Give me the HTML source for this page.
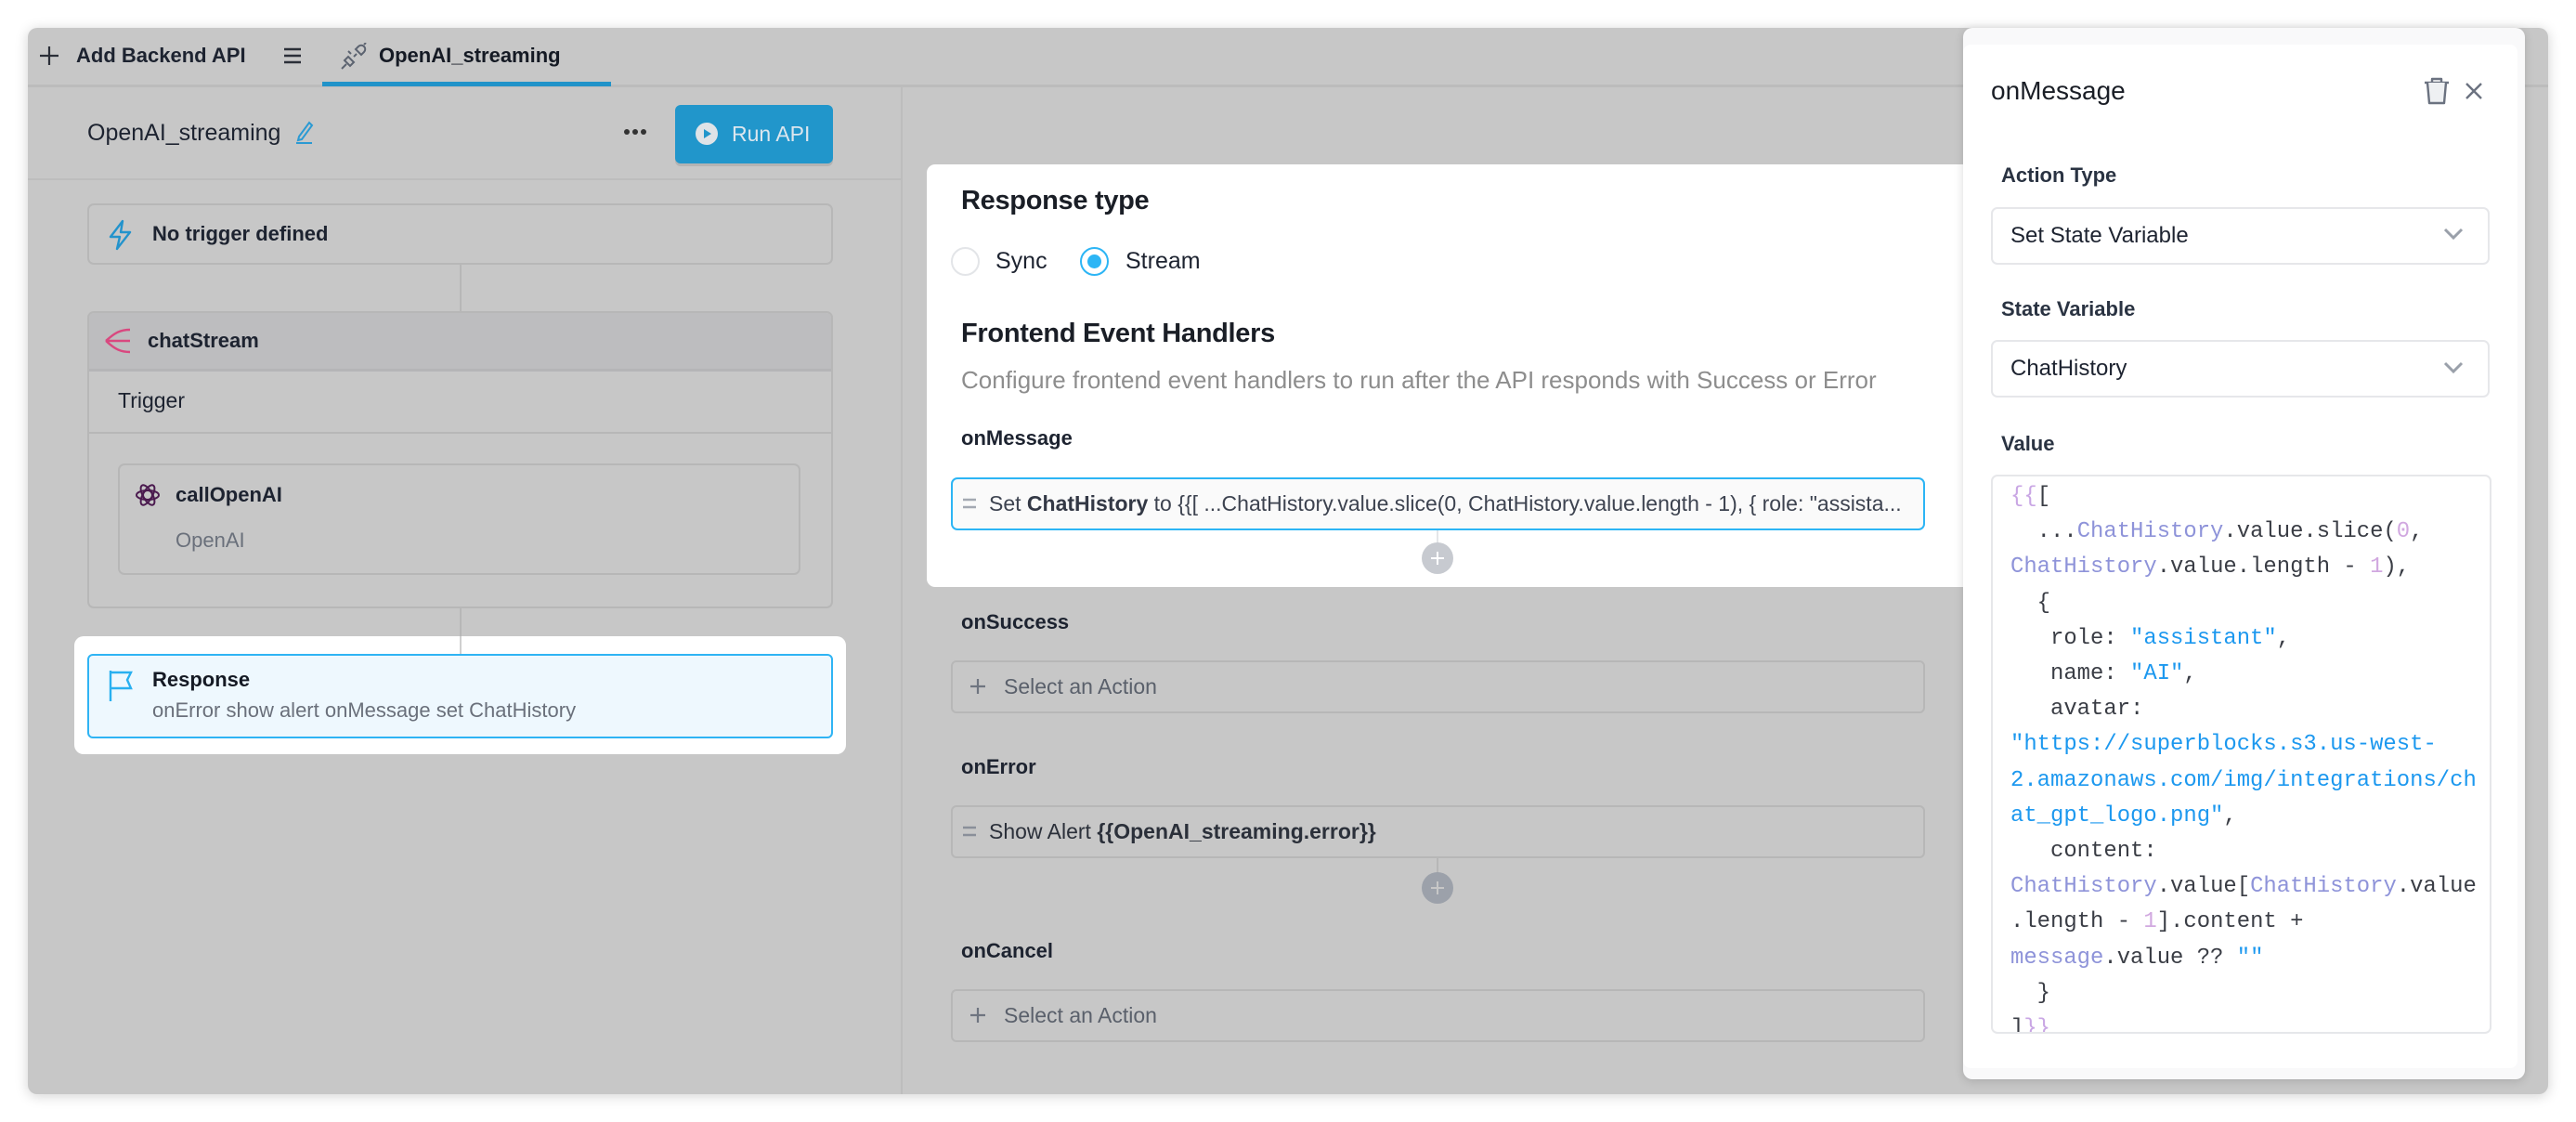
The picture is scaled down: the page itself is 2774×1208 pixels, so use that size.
<!DOCTYPE html>
<html><head><meta charset="utf-8"><style>
*{margin:0;padding:0;box-sizing:border-box}
body{width:2774px;height:1208px;background:#fff;position:relative;overflow:hidden;font-family:"Liberation Sans",Arial,sans-serif;color:#1d2330}
.a{position:absolute}
.t{position:absolute;white-space:nowrap;line-height:40px;height:40px}
.b{font-weight:bold}
.mono{font-family:"Liberation Mono",monospace}
</style></head><body>
<div class="a" style="left:30px;top:30px;width:2714px;height:1148px;background:#c7c7c7;border-radius:10px;box-shadow:0 2px 14px rgba(0,0,0,.18)"></div>
<div class="a" style="left:30px;top:91px;width:2714px;height:3px;background:#bcbcbc"></div>
<svg class="a" style="left:42px;top:49px" width="22" height="22" viewBox="0 0 22 22"><path d="M11 1v20M1 11h20" stroke="#2b2f38" stroke-width="2.2"/></svg>
<div class="t b" style="left:82px;top:40px;font-size:22px;color:#1d2330">Add Backend API</div>
<svg class="a" style="left:305px;top:51px" width="20" height="18" viewBox="0 0 20 18"><path d="M1 2h18M1 9h18M1 16h18" stroke="#2b2f38" stroke-width="2.4"/></svg>
<svg class="a" style="left:366px;top:46px" width="30" height="30" viewBox="0 0 30 30" fill="none" stroke="#5c6370" stroke-width="2"><path d="M2 28l5-5M5 19l6 6 4-4-6-6z M12 12l-3-3M15 15l3-3 M17 7l6 6 3-3a4 4 0 0 0-6-6z M26 2l2-2"/></svg>
<div class="t b" style="left:408px;top:40px;font-size:22px;color:#151a24">OpenAI_streaming</div>
<div class="a" style="left:347px;top:88px;width:311px;height:5px;background:#2193c9"></div>
<div class="a" style="left:970px;top:94px;width:2px;height:1084px;background:#bdbdbd"></div>
<div class="a" style="left:30px;top:192px;width:940px;height:2px;background:#bdbdbd"></div>
<div class="t" style="left:94px;top:123px;font-size:25px;color:#1d2330">OpenAI_streaming</div>
<svg class="a" style="left:316px;top:128px" width="24" height="28" viewBox="0 0 24 28" fill="none" stroke="#2b9ad3" stroke-width="2"><path d="M6 19L17 4l3 3L9 22l-4 1z"/><path d="M3 26h17"/></svg>
<svg class="a" style="left:671px;top:138px" width="26" height="8"><circle cx="4" cy="4" r="3" fill="#333"/><circle cx="13" cy="4" r="3" fill="#333"/><circle cx="22" cy="4" r="3" fill="#333"/></svg>
<div class="a" style="left:727px;top:113px;width:170px;height:63px;background:#2196cb;border-radius:6px;box-shadow:0 3px 0 #b3b3b3"></div>
<svg class="a" style="left:748px;top:131px" width="26" height="26" viewBox="0 0 26 26"><circle cx="13" cy="13" r="12" fill="#dfe3e7"/><path d="M10 8l8 5-8 5z" fill="#2196cb"/></svg>
<div class="t" style="left:788px;top:124px;font-size:23px;color:#dce6ee">Run API</div>
<div class="a" style="left:94px;top:219px;width:803px;height:66px;border:2px solid #b7b7b7;border-radius:7px"></div>
<svg class="a" style="left:116px;top:236px" width="28" height="34" viewBox="0 0 28 34" fill="none" stroke="#2393cc" stroke-width="2.4" stroke-linejoin="round"><path d="M16 2L3 19h10l-3 13 14-18H14z"/></svg>
<div class="t b" style="left:164px;top:232px;font-size:22px;color:#1d2330">No trigger defined</div>
<div class="a" style="left:495px;top:285px;width:2px;height:50px;background:#b7b7b7"></div>
<div class="a" style="left:94px;top:335px;width:803px;height:320px;border:2px solid #b7b7b7;border-radius:7px;overflow:hidden">
 <div class="a" style="left:0;top:0;width:100%;height:63px;background:#bdbdbf;border-bottom:3px solid #b5b5b7"></div>
 <div class="a" style="left:0;top:128px;width:100%;height:2px;background:#b7b7b7"></div>
</div>
<svg class="a" style="left:112px;top:352px" width="30" height="30" viewBox="0 0 30 30" fill="none" stroke="#d9487f" stroke-width="2.4"><path d="M28 3C14 3 8 10 2 15M28 27C14 27 8 20 2 15M2 15h26"/></svg>
<div class="t b" style="left:159px;top:347px;font-size:22px;color:#1d2330">chatStream</div>
<div class="t" style="left:127px;top:411px;font-size:23px;color:#1d2330">Trigger</div>
<div class="a" style="left:127px;top:499px;width:735px;height:120px;border:2px solid #b7b7b7;border-radius:7px"></div>
<svg class="a" style="left:145px;top:519px" width="28" height="28" viewBox="0 0 28 28" fill="none" stroke="#4b1a4f" stroke-width="2"><circle cx="14" cy="14" r="5"/><ellipse cx="14" cy="14" rx="12" ry="5"/><ellipse cx="14" cy="14" rx="12" ry="5" transform="rotate(60 14 14)"/><ellipse cx="14" cy="14" rx="12" ry="5" transform="rotate(120 14 14)"/></svg>
<div class="t b" style="left:189px;top:513px;font-size:22px;color:#1d2330">callOpenAI</div>
<div class="t" style="left:189px;top:562px;font-size:22px;color:#6a707b">OpenAI</div>
<div class="a" style="left:495px;top:655px;width:2px;height:45px;background:#b7b7b7"></div>
<div class="a" style="left:80px;top:685px;width:831px;height:127px;background:#fff;border-radius:10px"></div>
<div class="a" style="left:495px;top:685px;width:2px;height:20px;background:#d0d0d0"></div>
<div class="a" style="left:94px;top:704px;width:803px;height:91px;background:#eef8fe;border:2px solid #2fb4f4;border-radius:6px"></div>
<svg class="a" style="left:116px;top:720px" width="30" height="36" viewBox="0 0 30 36" fill="none" stroke="#29b0f0" stroke-width="2.4"><path d="M3 2v33M3 4h22l-4 8 4 9H3"/></svg>
<div class="t b" style="left:164px;top:712px;font-size:22px;color:#151a24">Response</div>
<div class="t" style="left:164px;top:745px;font-size:22px;color:#6a707b">onError show alert onMessage set ChatHistory</div>
<div class="t b" style="left:1035px;top:650px;font-size:22px;color:#1d2330">onSuccess</div>
<div class="a" style="left:1024px;top:711px;width:1049px;height:57px;border:2px solid #b7b7b7;border-radius:6px"></div>
<svg class="a" style="left:1044px;top:730px" width="18" height="18"><path d="M9 1v16M1 9h16" stroke="#6f7580" stroke-width="2.2"/></svg>
<div class="t" style="left:1081px;top:719px;font-size:23px;color:#5a606b">Select an Action</div>
<div class="t b" style="left:1035px;top:806px;font-size:22px;color:#1d2330">onError</div>
<div class="a" style="left:1024px;top:867px;width:1049px;height:57px;border:2px solid #b7b7b7;border-radius:6px"></div>
<svg class="a" style="left:1036px;top:888px" width="16" height="14"><path d="M1 3h14M1 11h14" stroke="#8a8f99" stroke-width="2.5"/></svg>
<div class="t" style="left:1065px;top:875px;font-size:23px;color:#2b303a">Show Alert <b>{{OpenAI_streaming.error}}</b></div>
<div class="a" style="left:1547px;top:924px;width:2px;height:16px;background:#b7b7b7"></div>
<div class="a" style="left:1531px;top:939px;width:34px;height:34px;border-radius:50%;background:#9ca1aa"></div>
<svg class="a" style="left:1540px;top:948px" width="16" height="16"><path d="M8 1v14M1 8h14" stroke="#c7c7c7" stroke-width="2"/></svg>
<div class="t b" style="left:1035px;top:1004px;font-size:22px;color:#1d2330">onCancel</div>
<div class="a" style="left:1024px;top:1065px;width:1049px;height:57px;border:2px solid #b7b7b7;border-radius:6px"></div>
<svg class="a" style="left:1044px;top:1084px" width="18" height="18"><path d="M9 1v16M1 9h16" stroke="#6f7580" stroke-width="2.2"/></svg>
<div class="t" style="left:1081px;top:1073px;font-size:23px;color:#5a606b">Select an Action</div>
<div class="a" style="left:998px;top:177px;width:1140px;height:455px;background:#fff;border-radius:9px"></div>
<div class="t" style="left:1035px;top:196px;font-size:29px;color:#1a1e26;font-weight:bold;letter-spacing:-0.3px">Response type</div>
<div class="a" style="left:1024px;top:266px;width:31px;height:31px;border-radius:50%;border:2px solid #e3e5e8"></div>
<div class="t" style="left:1072px;top:261px;font-size:25px;color:#1d2330">Sync</div>
<div class="a" style="left:1163px;top:266px;width:31px;height:31px;border-radius:50%;border:2px solid #2cb5f5"></div>
<div class="a" style="left:1171px;top:274px;width:15px;height:15px;border-radius:50%;background:#2cb5f5"></div>
<div class="t" style="left:1212px;top:261px;font-size:25px;color:#1d2330">Stream</div>
<div class="t" style="left:1035px;top:339px;font-size:29px;color:#1a1e26;font-weight:bold;letter-spacing:-0.3px">Frontend Event Handlers</div>
<div class="t" style="left:1035px;top:389px;font-size:26px;color:#8d8d8d">Configure frontend event handlers to run after the API responds with Success or Error</div>
<div class="t b" style="left:1035px;top:452px;font-size:22px;color:#1d2330">onMessage</div>
<div class="a" style="left:1024px;top:514px;width:1049px;height:57px;border:2px solid #2cb5f5;border-radius:7px;background:#fafafa"></div>
<svg class="a" style="left:1036px;top:535px" width="16" height="14"><path d="M1 3h14M1 11h14" stroke="#a4a9b2" stroke-width="2.5"/></svg>
<div class="a" style="left:1065px;top:522px;width:1000px;height:40px;overflow:hidden;white-space:nowrap;line-height:40px;font-size:23px;color:#3d4350">Set <b style="color:#333845">ChatHistory</b> to {{[ ...ChatHistory.value.slice(0, ChatHistory.value.length - 1), { role: "assista...</div>
<div class="a" style="left:1547px;top:571px;width:2px;height:14px;background:#e4e6e9"></div>
<div class="a" style="left:1531px;top:584px;width:34px;height:34px;border-radius:50%;background:#c7cad0"></div>
<svg class="a" style="left:1540px;top:593px" width="16" height="16"><path d="M8 1v14M1 8h14" stroke="#fff" stroke-width="2"/></svg>
<div class="a" style="left:2114px;top:30px;width:605px;height:1132px;background:#f9f9fa;border-radius:10px;box-shadow:0 2px 10px rgba(0,0,0,.15)"></div>
<div class="a" style="left:2114px;top:48px;width:597px;height:1102px;background:#fff;border-radius:8px"></div>
<div class="t" style="left:2144px;top:78px;font-size:28px;color:#1a1e26">onMessage</div>
<svg class="a" style="left:2609px;top:82px" width="30" height="32" viewBox="0 0 30 32" fill="none" stroke="#6b7280" stroke-width="2.4" stroke-linejoin="round"><path d="M2 7h26M10 7V3h10v4" /><path d="M5 7l2 22h16l2-22" fill="#eef0f2"/></svg>
<svg class="a" style="left:2654px;top:88px" width="20" height="20" viewBox="0 0 20 20"><path d="M2 2l16 16M18 2L2 18" stroke="#6b7280" stroke-width="2.4"/></svg>
<div class="t b" style="left:2155px;top:169px;font-size:22px;color:#2a3342">Action Type</div>
<div class="a" style="left:2144px;top:223px;width:537px;height:62px;border:2px solid #e6e7ea;border-radius:7px"></div>
<div class="t" style="left:2165px;top:234px;font-size:24px;color:#1d2330">Set State Variable</div>
<svg class="a" style="left:2631px;top:245px" width="22" height="14"><path d="M2 2l9 9 9-9" fill="none" stroke="#9aa0aa" stroke-width="3"/></svg>
<div class="t b" style="left:2155px;top:313px;font-size:22px;color:#2a3342">State Variable</div>
<div class="a" style="left:2144px;top:366px;width:537px;height:62px;border:2px solid #e6e7ea;border-radius:7px"></div>
<div class="t" style="left:2165px;top:377px;font-size:24px;color:#1d2330">ChatHistory</div>
<svg class="a" style="left:2631px;top:389px" width="22" height="14"><path d="M2 2l9 9 9-9" fill="none" stroke="#9aa0aa" stroke-width="3"/></svg>
<div class="t b" style="left:2155px;top:458px;font-size:22px;color:#2a3342">Value</div>
<div class="a" style="left:2144px;top:511px;width:539px;height:602px;border:2px solid #e6e7ea;border-radius:7px;overflow:hidden">
<pre class="mono" style="position:absolute;left:19px;top:3px;font-size:23.9px;line-height:38.2px;color:#3a3d45"><span style="color:#c9a6e4">{{</span>[
  ...<span style="color:#8e93d9">ChatHistory</span>.value.slice(<span style="color:#d1a8e0">0</span>,
<span style="color:#8e93d9">ChatHistory</span>.value.length - <span style="color:#d1a8e0">1</span>),
  {
   role: <span style="color:#1c98ef">"assistant"</span>,
   name: <span style="color:#1c98ef">"AI"</span>,
   avatar:
<span style="color:#1c98ef">"https://superblocks.s3.us-west-
2.amazonaws.com/img/integrations/ch
at_gpt_logo.png"</span>,
   content:
<span style="color:#8e93d9">ChatHistory</span>.value[<span style="color:#8e93d9">ChatHistory</span>.value
.length - <span style="color:#d1a8e0">1</span>].content +
<span style="color:#8e93d9">message</span>.value ?? <span style="color:#1c98ef">""</span>
  }
]<span style="color:#c9a6e4">}}</span></pre>
</div>
</body></html>
